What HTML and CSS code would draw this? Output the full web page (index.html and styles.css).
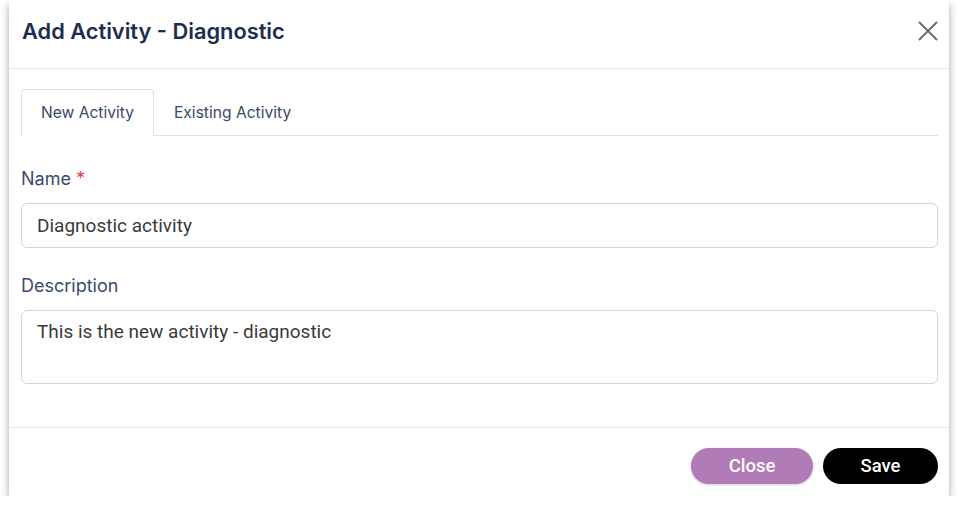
FILE: index.html
```html
<!DOCTYPE html>
<html lang="en">
<head>
    <meta charset="UTF-8">
    <meta name="viewport" content="width=device-width, initial-scale=1.0">
    <title>Add Activity</title>
    <link rel="stylesheet" href="styles.css">
</head>
<body>
    <div class="modal">
        <div class="modal-header">
            <h1>Add Activity - Diagnostic</h1>
            <button class="close-x" aria-label="Close">
                <svg width="22" height="22" viewBox="0 0 22 22">
                    <path d="M2 2 L20 20 M20 2 L2 20" stroke="#6b6b6b" stroke-width="2" fill="none"/>
                </svg>
            </button>
        </div>

        <div class="modal-body">
            <div class="tabs">
                <div class="tab active">New Activity</div>
                <div class="tab">Existing Activity</div>
            </div>

            <div class="field">
                <label for="name">Name <span class="req">*</span></label>
                <input type="text" id="name" value="Diagnostic activity">
            </div>

            <div class="field">
                <label for="description">Description</label>
                <textarea id="description">This is the new activity - diagnostic</textarea>
            </div>
        </div>

        <div class="modal-footer">
            <button class="btn btn-close">Close</button>
            <button class="btn btn-save">Save</button>
        </div>
    </div>
</body>
</html>
```

FILE: styles.css
```css
body {
    margin: 0;
    background: #fff;
    font-family: Inter, Roboto, sans-serif;
}
.modal {
    width: 940px;
    margin-left: 9px;
    height: 496px;
    background: #fff;
    box-shadow: 0 4px 8px rgba(0, 0, 0, 0.35);
    display: flex;
    flex-direction: column;
}
.modal-header {
    height: 69px;
    box-sizing: border-box;
    border-bottom: 1px solid #e3e6ec;
    display: flex;
    align-items: center;
    justify-content: space-between;
    padding: 0 10px 7px 13px;
}
h1 {
    margin: 0;
    font-size: 21.8px;
    font-weight: 600;
    color: #1d2d50;
}
.close-x {
    background: none;
    border: none;
    padding: 0;
    display: flex;
    cursor: pointer;
}
.modal-body {
    flex: 1;
    padding: 20px 11px 0 12px;
    border-bottom: 1px solid #e3e6ec;
}
.tabs {
    display: flex;
    border-bottom: 1px solid #dee2e6;
    height: 46px;
}
.tab {
    padding: 0 19px;
    font-size: 15.6px;
    color: #3b4862;
    display: flex;
    align-items: center;
    border: 1px solid transparent;
    border-radius: 4px 4px 0 0;
    margin-bottom: -1px;
}
.tab.active {
    border-color: #dee2e6;
    border-bottom-color: #fff;
    background: #fff;
}
.field {
    margin-top: 32px;
}
.field + .field {
    margin-top: 27px;
}
label {
    display: block;
    font-size: 18px;
    color: #3b4a6b;
    margin-bottom: 14px;
}
.req {
    color: #e5413a;
}
input, textarea {
    display: block;
    width: 100%;
    box-sizing: border-box;
    border: 1px solid #d6d6d6;
    border-radius: 6px;
    font-family: Roboto, sans-serif;
    font-size: 19px;
    color: #3a3a3a;
    padding: 0 15px;
}
input {
    height: 45px;
}
textarea {
    height: 74px;
    padding-top: 9px;
    resize: none;
}
.modal-footer {
    height: 68px;
    box-sizing: border-box;
    display: flex;
    align-items: center;
    justify-content: flex-end;
    gap: 10px;
    padding: 8px 11px 0 0;
}
.btn {
    height: 36px;
    border: none;
    border-radius: 18px;
    font-family: Roboto, sans-serif;
    font-size: 18.5px;
    font-weight: 500;
    color: #fff;
    cursor: pointer;
}
.btn-close {
    width: 122px;
    background: #b07bb6;
    box-shadow: 0 1px 3px rgba(0, 0, 0, 0.2);
}
.btn-save {
    width: 115px;
    background: #000;
}
```
